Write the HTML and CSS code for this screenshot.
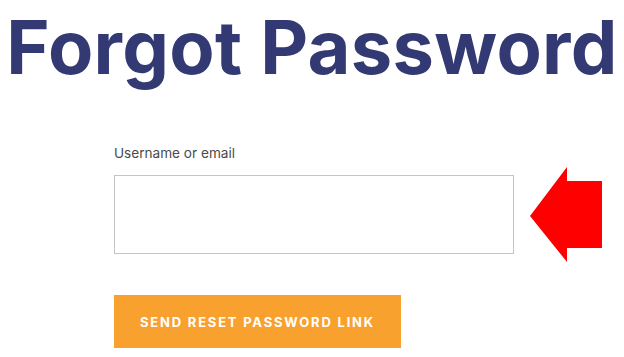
FILE: index.html
```html
<!DOCTYPE html>
<html>
  <head>
    <meta charset="utf-8">
    <link rel="stylesheet" href="styles.css">
    <title>Forgot Password</title>
  </head>
  <body>
    <h1 class="page-title">Forgot Password</h1>

    <form class="reset-form">
      <label for="user-login" class="field-label">Username or email</label>
      <div class="field-row">
        <input type="text" id="user-login" name="user-login" class="field-input">
        <svg class="hint-arrow" width="72" height="95" viewBox="0 0 72 95">
          <polygon points="0,49 37,0 37,14 72,14 72,81 37,81 37,95" fill="#ff0000"/>
        </svg>
      </div>
      <button type="submit" class="submit-btn">Send reset password link</button>
    </form>
  </body>
</html>
```

FILE: styles.css
```css
* {
  box-sizing: border-box;
}
body {
  margin: 0;
  font-family: Inter, "Noto Sans", sans-serif;
  background-color: #fff;
  color: #333;
}
.page-title {
  margin: 0;
  padding-top: 6px;
  text-align: center;
  font-size: 74px;
  line-height: 82px;
  font-weight: 700;
  letter-spacing: 0.3px;
  color: #333a73;
}
.reset-form {
  display: flex;
  flex-direction: column;
  align-items: flex-start;
  padding-left: 114px;
  padding-top: 57px;
}
.field-label {
  font-size: 13.6px;
  line-height: 16px;
  color: #4a4a4a;
  margin-bottom: 14px;
}
.field-row {
  display: flex;
  align-items: center;
  gap: 16px;
}
.field-input {
  width: 400px;
  height: 79px;
  border: 1px solid #c4c4c4;
  border-radius: 0;
  background: #fff;
  font-size: 14px;
  padding: 0 12px;
}
.hint-arrow {
  display: block;
  margin: -8px 0;
}
.submit-btn {
  margin-top: 41px;
  width: 287px;
  height: 53px;
  border: 0;
  background-color: #f9a12e;
  color: #fff;
  font-family: Inter, sans-serif;
  font-size: 13px;
  font-weight: 700;
  letter-spacing: 1.8px;
  text-transform: uppercase;
}
```
